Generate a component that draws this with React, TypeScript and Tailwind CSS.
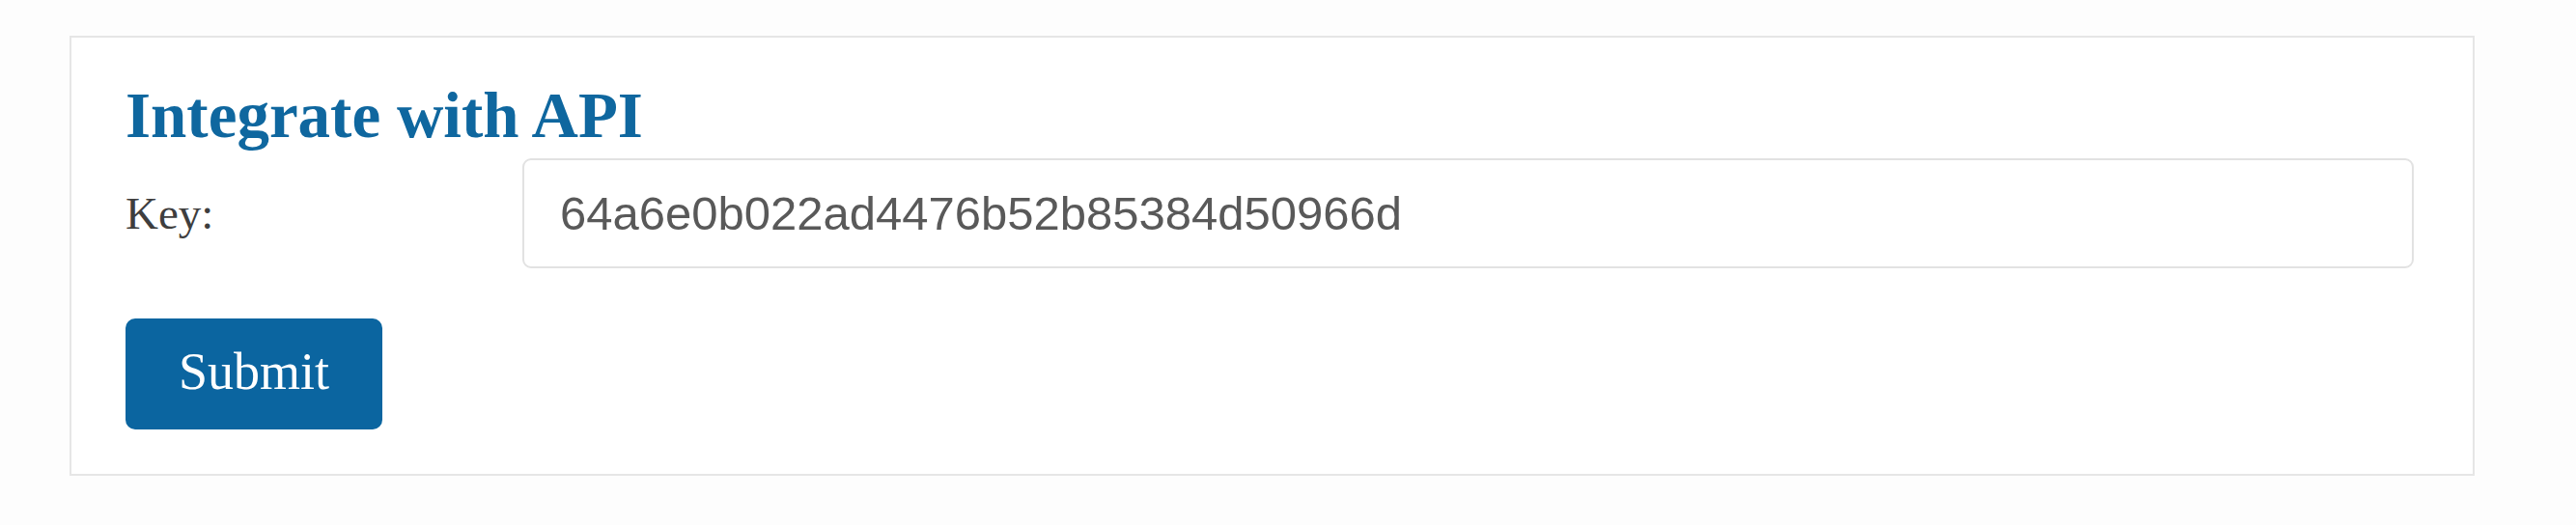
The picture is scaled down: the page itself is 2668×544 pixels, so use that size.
import React, { useState } from 'react';

const App: React.FC = () => {
  const [apiKey, setApiKey] = useState('64a6e0b022ad4476b52b85384d50966d');

  return (
    <div className="w-full h-[544px] bg-[#fdfdfd] pt-[37px]">
      <div className="ml-[72px] w-[2491px] h-[456px] border-2 border-[#e6e6e6] bg-white pl-[56px] pr-[61px] pt-[41px]">
        <h2 className="h-[79px] text-[67px] leading-[79px] font-bold text-[#0f679f] font-['Liberation_Serif',serif]">
          Integrate with API
        </h2>
        <div className="mt-[5px] flex items-center">
          <label className="w-[411px] shrink-0 text-[47px] text-[#3e3e3e] font-['Liberation_Serif',serif]">
            Key:
          </label>
          <input
            type="text"
            value={apiKey}
            onChange={(e) => setApiKey(e.target.value)}
            className="flex-1 h-[114px] rounded-[9px] border-2 border-[#e2e2e2] bg-white pl-[37px] text-[49px] text-[#595959] font-['Liberation_Sans',Arial,sans-serif] outline-none"
          />
        </div>
        <button className="mt-[52px] w-[266px] h-[115px] rounded-[10px] bg-[#0b65a0] text-white text-[54px] font-['Liberation_Serif',serif] flex items-center justify-center pb-[4px]">
          Submit
        </button>
      </div>
    </div>
  );
};

export default App;
